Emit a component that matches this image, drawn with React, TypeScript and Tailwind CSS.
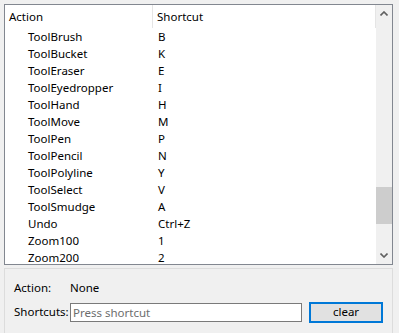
import React from "react";

const rows: [string, string][] = [
  ["ToolBrush", "B"],
  ["ToolBucket", "K"],
  ["ToolEraser", "E"],
  ["ToolEyedropper", "I"],
  ["ToolHand", "H"],
  ["ToolMove", "M"],
  ["ToolPen", "P"],
  ["ToolPencil", "N"],
  ["ToolPolyline", "Y"],
  ["ToolSelect", "V"],
  ["ToolSmudge", "A"],
  ["Undo", "Ctrl+Z"],
  ["Zoom100", "1"],
  ["Zoom200", "2"],
];

function Chevron({ up }: { up?: boolean }) {
  return (
    <svg width="8" height="5" viewBox="0 0 8 5">
      <polyline
        points={up ? "0.5,4.5 4,1 7.5,4.5" : "0.5,0.5 4,4 7.5,0.5"}
        fill="none"
        stroke="#606060"
        strokeWidth="1.6"
      />
    </svg>
  );
}

export default function App() {
  return (
    <div
      className="w-[399px] h-[333px] overflow-hidden bg-[#f0f0f0] pt-[4px] pl-[4px] text-[11.5px] text-black"
      style={{ fontFamily: '"Noto Sans", "Liberation Sans", sans-serif' }}
    >
      {/* shortcut list */}
      <div className="w-[389px] h-[261px] border border-[#828790] bg-white flex">
        <div className="flex-1 overflow-hidden flex flex-col">
          <div className="flex h-[23px] shrink-0">
            <div className="w-[148px] pl-[4px] flex items-center border-r border-[#e5e5e5]">Action</div>
            <div className="flex-1 pl-[4px] flex items-center border-r border-[#e5e5e5]">Shortcut</div>
          </div>
          {rows.map(([name, key]) => (
            <div key={name} className="flex h-[17px] shrink-0 items-center">
              <div className="w-[149px] pl-[23px]">{name}</div>
              <div className="flex-1 pl-[4px]">{key}</div>
            </div>
          ))}
        </div>
        <div className="w-[16px] bg-[#f0f0f0] flex flex-col">
          <div className="h-[17px] flex items-center justify-center">
            <Chevron up />
          </div>
          <div className="flex-1">
            <div className="mt-[165px] h-[37px] bg-[#cdcdcd]" />
          </div>
          <div className="h-[17px] flex items-center justify-center">
            <Chevron />
          </div>
        </div>
      </div>

      {/* editor */}
      <div className="mt-[3px] w-[389px] h-[80px] border border-[#dcdcdc] pl-[9px] pt-[11px]">
        <div className="flex items-center h-[16px]">
          <div className="w-[56px] shrink-0">Action:</div>
          <div>None</div>
        </div>
        <div className="flex items-center h-[22px] mt-[5px]">
          <div className="w-[56px] shrink-0 whitespace-nowrap">Shortcuts:</div>
          <input
            className="w-[232px] h-[19px] border border-[#7a7a7a] bg-white px-[2px] text-[11.5px] outline-none placeholder:text-[#6d6d6d]"
            placeholder="Press shortcut"
          />
          <button className="ml-[7px] w-[74px] h-[21px] border-2 border-[#0078d7] bg-[#e1e1e1] text-[11.5px] flex items-center justify-center">
            clear
          </button>
        </div>
      </div>
    </div>
  );
}
